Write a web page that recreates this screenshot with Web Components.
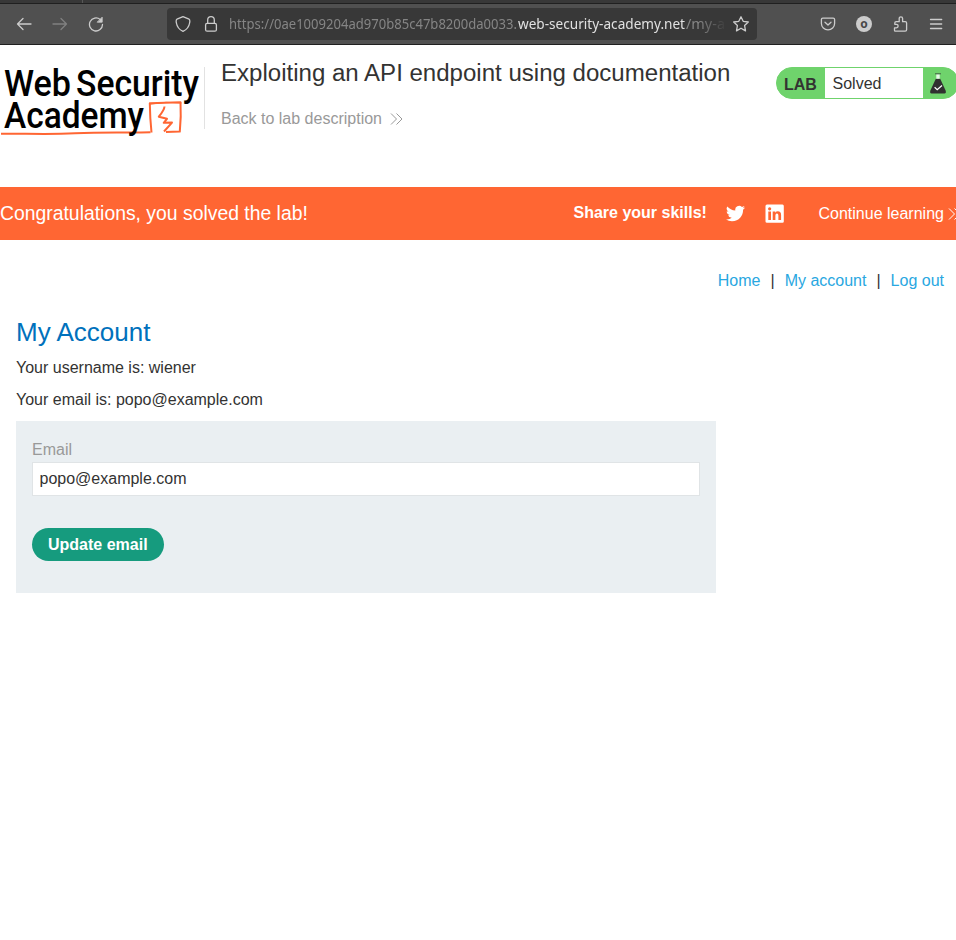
<!DOCTYPE html>
<html lang="en">
<head>
<meta charset="utf-8">
<title>Exploiting an API endpoint using documentation</title>
<style>
html,body{margin:0;background:#fff;overflow:hidden}
body{width:956px;height:940px;font:16px/18px "Liberation Sans",Arial,sans-serif;color:#333332}
</style>
</head>
<body>
<browser-bar></browser-bar>
<lab-header>Exploiting an API endpoint using documentation</lab-header>
<solved-banner>Congratulations, you solved the lab!</solved-banner>
<account-page></account-page>
<script>
const define = (name, html) => customElements.define(name, class extends HTMLElement {
  constructor() {
    super();
    const t = document.createElement('template');
    t.innerHTML = html;
    this.attachShadow({ mode: 'open' }).append(t.content.cloneNode(true));
  }
});

define('browser-bar', `
<style>
:host{display:flex;flex-direction:column;height:45px;color:#ccc}
svg{display:block;flex:none;fill:none;stroke:currentColor;stroke-width:1.3;stroke-linecap:round;stroke-linejoin:round}
.tabs{box-sizing:border-box;height:4px;background:#383838;border-bottom:1px solid #202020;display:flex}
.tabs i{width:1px;height:3px;margin-left:82px;background:#575757}
.bar{box-sizing:border-box;height:41px;background:#505050;border-bottom:1px solid #202020;display:flex;align-items:center;padding:0 12px 0 16px}
.nav{display:flex;gap:20px;width:151px}
.off{color:#808080}
.url{box-sizing:border-box;width:590px;height:32px;border-radius:4px;background:#383838;display:flex;align-items:center;padding:0 8px}
.lock{margin-left:12px}
.addr{margin:0 4px 0 10px;-webkit-mask-image:linear-gradient(90deg,#000 470px,transparent 498px);mask-image:linear-gradient(90deg,#000 470px,transparent 498px)}
.addr text{stroke:none;fill:#858585;font:14.3px "Noto Sans",sans-serif}
.addr .host{fill:#e0e0e0}
.tools{display:flex;gap:20px;margin-left:auto}
</style>
<div class="tabs"><i></i></div>
<div class="bar">
 <div class="nav">
  <svg width="16" height="16"><path d="M15 8H1.5M7 2.5L1.5 8L7 13.5"/></svg>
  <svg class="off" width="16" height="16"><path d="M1 8h13.5M9 2.5L14.5 8L9 13.5"/></svg>
  <svg width="16" height="16"><path d="M14.5 8.5A6.5 6.5 0 1 1 12.2 3.5"/><path d="M14.2 1.5v4.7H9.5z" fill="currentColor" stroke-width=".8"/></svg>
 </div>
 <div class="url">
  <svg width="16" height="16"><path d="M8 .7L14 3.1C15 3.5 15 5 14.6 7C14 11 11.5 13.7 8 15.4C4.500 13.700 2 11 1.400 7C1 5 1 3.500 2 3.100Z"/></svg>
  <svg class="lock" width="16" height="16"><rect x="2.600" y="7.400" width="10.800" height="7.800" rx="1.500"/><path d="M4.700 7.300V4a3.300 3.300 0 0 1 6.600 0v3.300"/></svg>
  <svg class="addr" width="500" height="24"><text x="0" y="17" textLength="288" lengthAdjust="spacingAndGlyphs">https://0ae1009204ad970b85c47b8200da0033.</text><text class="host" x="289" y="17" textLength="167" lengthAdjust="spacingAndGlyphs">web-security-academy.net</text><text x="457" y="17" textLength="39" lengthAdjust="spacingAndGlyphs">/my-a</text></svg>
  <svg width="16" height="16"><path d="M8 .8L10.200 5.300L15.300 6L11.600 9.500L12.500 14.900L8 12.200L3.500 14.900L4.400 9.500L.7 6L5.800 5.300Z"/></svg>
 </div>
 <div class="tools">
  <svg width="16" height="16"><path d="M2.800 2.200H13.200Q14.600 2.200 14.600 3.600V7.500A6.600 6.400 0 0 1 1.400 7.500V3.600Q1.400 2.200 2.800 2.200ZM5 6.300L8 9.100L11 6.300"/></svg>
  <svg width="16" height="16"><circle cx="8" cy="8" r="8" fill="#ccc" stroke="none"/><text x="8" y="11.500" text-anchor="middle" style="font:bold 12px 'Noto Sans',sans-serif;fill:#484848;stroke:none">o</text></svg>
  <svg width="16" height="16"><path d="M3.200 15.200H13.200Q14.600 15.200 14.600 13.800V7Q14.600 5.700 13.300 5.700H10.600V2.500a1.700 1.700 0 0 0-3.400 0V5.700H4.200Q2.800 5.700 2.800 7V8.300H4.400a1.700 1.700 0 0 1 0 3.500H2.500V14.500Q2.500 15.200 3.200 15.200Z"/></svg>
  <svg width="16" height="16"><path d="M2.500 3.500h11.200M2.500 8h11.200M2.500 12.500h11.200"/></svg>
 </div>
</div>`);

define('academy-logo', `
<style>:host{display:block;width:204px;height:74px}svg{display:block}text{font:500 37.500px Roboto,sans-serif;fill:#000}</style>
<svg width="204" height="74" viewBox="0 65 204 74">
<g fill="none" stroke="#ff6633" stroke-linejoin="round">
<path d="M1 133.700C22 133.300 45 134.800 75 133.300S125 132.900 150.500 132.300" stroke-width="2"/>
<path d="M151.500 132.500Q150 118 149.800 103.200Q165 102.500 180.500 102.200Q181.300 116 179.800 131.600L166 132" stroke-width="2"/>
<path d="M150 104.200Q166 101 181.500 103" stroke-width="1"/>
<path d="M164.500 106.500Q164.300 110 158.800 116.700L167 118.800L163.700 122.800L172 122.600L164 131.500" stroke-width="2"/>
</g>
<text x="4" y="95.500" textLength="67" lengthAdjust="spacingAndGlyphs">Web</text>
<text x="76" y="95.500" textLength="123" lengthAdjust="spacingAndGlyphs">Security</text>
<text x="4" y="128" textLength="140" lengthAdjust="spacingAndGlyphs">Academy</text>
</svg>`);

define('chevron-pair', `
<style>:host{display:block;flex:none;width:13px;height:12px}svg{display:block}</style>
<svg width="13" height="12" fill="none" stroke="currentColor"><path d="M1 .5L6.500 6L1 11.500M6.500 .5L12 6L6.500 11.500"/></svg>`);

define('lab-status', `
<style>
:host{box-sizing:border-box;display:flex;flex:none;width:183px;height:32px;border:1px solid #6fd36c;border-radius:16px;background:#6fd36c;overflow:hidden}
b{width:48px;box-sizing:border-box;padding:8px 0 0 7px}
span{width:98px;box-sizing:border-box;background:#fff;padding:7px 0 0 7.500px}
svg{margin:5px 0 0 6px}
</style>
<b>LAB</b><span><slot></slot></span>
<svg width="18" height="22" viewBox="0 0 18 22"><path d="M6.800 5.800H11.200L16.600 17.500Q17.500 20.500 15.500 20.500H2.500Q.5 20.500 1.400 17.500Z" fill="#303030"/><path d="M7.300 1.200h3.400v4.600H7.300z" fill="#e8f8e8"/><path d="M6 .8h6" stroke="#303030" stroke-width=".7"/><path d="M5.600 14.300L8.200 16.800L13 12.500" fill="none" stroke="#fff" stroke-width="1.200"/></svg>`);

define('lab-header', `
<style>
:host{display:flex;height:142px;box-sizing:border-box;align-items:flex-start;overflow:hidden}
academy-logo{margin-top:20px;flex:none}
.info{margin-top:22px;border-left:1px solid #e2e2e2;height:62px;padding-left:16px;width:554px;flex:none}
h2{font-size:24.060px;line-height:28px;font-weight:400;margin:-8px 0 0;white-space:nowrap}
.back{display:flex;align-items:center;gap:8px;color:#999;margin-top:23px}
lab-status{margin:22px 0 0 1px}
</style>
<academy-logo></academy-logo>
<div class="info"><h2><slot></slot></h2><div class="back">Back to lab description<chevron-pair></chevron-pair></div></div>
<lab-status>Solved</lab-status>`);

define('solved-banner', `
<style>
:host{display:flex;align-items:center;height:53px;background:#ff6633;color:#fff;white-space:nowrap;overflow:hidden}
.msg{font-size:19.370px;width:573.500px;flex:none;margin-top:-2px}
b{width:152px;flex:none;margin-top:-2px}
svg{flex:none;fill:#fff}
.li{margin-left:20px}
.more{margin:0 4px 0 34px}
</style>
<span class="msg"><slot></slot></span><b>Share your skills!</b>
<svg width="19" height="19" viewBox="0 0 24 24"><path d="M23.950 4.570a10 10 0 0 1-2.820.770 4.960 4.960 0 0 0 2.160-2.720c-.950.550-2 .950-3.130 1.180a4.920 4.920 0 0 0-8.380 4.480C7.690 8.090 4.070 6.130 1.640 3.160a4.920 4.920 0 0 0 1.520 6.570 4.900 4.900 0 0 1-2.230-.610v.060a4.920 4.920 0 0 0 3.950 4.830 5 5 0 0 1-2.210.080 4.940 4.940 0 0 0 4.600 3.420A9.870 9.870 0 0 1 0 19.540a14 14 0 0 0 7.550 2.210c9.050 0 14-7.500 14-13.980 0-.210 0-.420-.020-.630a10 10 0 0 0 2.460-2.550z"/></svg>
<svg class="li" width="20" height="20" viewBox="0 0 20 20"><path fill-rule="evenodd" d="M2 .5H17.500Q18.800 .5 18.800 2V17.500Q18.800 18.800 17.500 18.800H2Q.5 18.800 .5 17.500V2Q.5 .5 2 .5ZM3.300 7.500V16H6V7.500ZM4.650 3.300a1.550 1.550 0 1 0 .01 0ZM7.700 7.500V16H10.400V11.500Q10.400 9.500 11.900 9.500T13.400 11.500V16H16.100V11Q16.100 7.300 12.900 7.300Q11.200 7.300 10.300 8.700V7.500Z"/></svg>
<span class="more">Continue learning</span><chevron-pair></chevron-pair>`);

define('email-form', `
<style>
:host{box-sizing:border-box;display:flex;flex-direction:column;align-items:flex-start;width:700px;height:172px;background:#eaeff2;padding:20px 16px}
label{color:#999}
input{box-sizing:border-box;width:668px;height:34px;margin:3px 0 32px;border:1px solid #e0e4e6;padding:0 6.500px;font:inherit;color:inherit;background:#fff;border-radius:0}
button{height:33px;border:0;border-radius:17px;background:#169b7e;color:#fff;font:bold 16px "Liberation Sans",Arial,sans-serif;padding:0 16px}
</style>
<label for="e">Email</label><input id="e" value="popo@example.com"><button>Update email</button>`);

define('account-page', `
<style>
:host{display:block;padding:32px 12px 0 16px}
nav{display:flex;justify-content:flex-end;gap:10px;color:#333332}
a{color:#29a7e1}
h1{font-size:26px;line-height:30px;font-weight:400;color:#0071bc;margin:27px 0 12px}
p{margin:0 0 14px}
p+p{margin-bottom:12px}
</style>
<nav><a>Home</a><span>|</span><a>My account</a><span>|</span><a>Log out</a></nav>
<h1>My Account</h1>
<p>Your username is: wiener</p><p>Your email is: popo@example.com</p>
<email-form></email-form>`);
</script>
</body>
</html>
